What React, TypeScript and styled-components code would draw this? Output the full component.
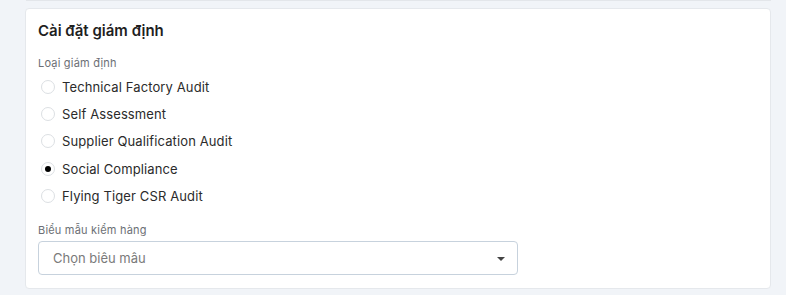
import React, { useState } from "react"
import styled, { createGlobalStyle } from "styled-components"

const GlobalStyle = createGlobalStyle`
  html, body {
    margin: 0;
    padding: 0;
    background: #f1f4f8;
    font-family: Inter, "Noto Sans", sans-serif;
  }
`

const auditTypes = [
  "Technical Factory Audit",
  "Self Assessment",
  "Supplier Qualification Audit",
  "Social Compliance",
  "Flying Tiger CSR Audit",
]

export default function App() {
  const [selected, setSelected] = useState("Social Compliance")

  return <Page>
    <GlobalStyle />
    <PrevCardEdge />
    <Card>
      <Title>Cài đặt giám định</Title>
      <FieldLabel>Loại giám định</FieldLabel>
      <RadioGroup>
        {auditTypes.map((type) => {
          return <RadioRow key={type} onClick={() => setSelected(type)}>
            <RadioCircle $checked={selected === type} />
            <RadioText>{type}</RadioText>
          </RadioRow>
        })}
      </RadioGroup>
      <FieldLabel $top={14}>Biểu mẫu kiểm hàng</FieldLabel>
      <Select>
        <Placeholder>Chọn biêu mâu</Placeholder>
        <Caret />
      </Select>
    </Card>
  </Page>
}

const Page = styled.div`
  width: 786px;
  height: 295px;
  display: flex;
  flex-direction: column;
  overflow: hidden;
`

const PrevCardEdge = styled.div`
  height: 1px;
  margin: 0 15px 0 26px;
  background: #e3e6ea;
`

const Card = styled.div`
  margin: 7px 15px 0 25px;
  height: 281px;
  box-sizing: border-box;
  background: #fff;
  border: 1px solid #e5e8ec;
  border-radius: 4px;
  padding: 12px;
  display: flex;
  flex-direction: column;
`

const Title = styled.div`
  font-size: 15px;
  line-height: 20px;
  font-weight: 600;
  color: #1f1f1f;
`

const FieldLabel = styled.div<{ $top?: number }>`
  margin-top: ${(p) => p.$top ?? 14}px;
  font-size: 11px;
  line-height: 16px;
  letter-spacing: 0.2px;
  color: #6c6f75;
`

const RadioGroup = styled.div`
  display: flex;
  flex-direction: column;
  margin-top: 2px;
`

const RadioRow = styled.label`
  display: flex;
  align-items: center;
  height: 27px;
  gap: 7px;
  padding-left: 3px;
  cursor: pointer;

  &:nth-child(n + 4) {
    transform: translateY(1px);
  }
`

const RadioCircle = styled.span<{ $checked: boolean }>`
  width: 14px;
  height: 14px;
  box-sizing: border-box;
  border-radius: 50%;
  border: 1px solid #dcdfe3;
  background: #fff;
  display: flex;
  align-items: center;
  justify-content: center;

  &::after {
    content: "";
    display: ${(p) => (p.$checked ? "block" : "none")};
    width: 6px;
    height: 6px;
    border-radius: 50%;
    background: #000;
  }
`

const RadioText = styled.span`
  font-size: 13px;
  letter-spacing: 0.12px;
  color: #2b2b2b;
`

const Select = styled.div`
  margin-top: 3px;
  width: 480px;
  height: 34px;
  box-sizing: border-box;
  border: 1px solid #c7d2dd;
  border-radius: 4px;
  display: flex;
  align-items: center;
  justify-content: space-between;
  padding: 0 12px 0 14px;
`

const Placeholder = styled.span`
  font-size: 13px;
  color: #7a7a7a;
`

const Caret = styled.span`
  width: 0;
  height: 0;
  border-left: 4px solid transparent;
  border-right: 4px solid transparent;
  border-top: 4px solid #444;
  margin-top: 2px;
`
